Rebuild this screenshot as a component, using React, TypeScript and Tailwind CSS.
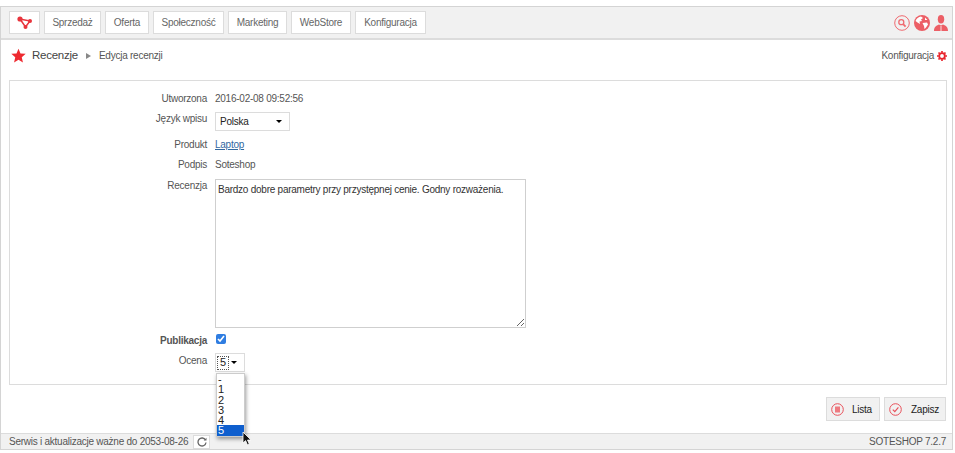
const menu = [
  { label: 'Sprzedaż', w: 'w-[57px]' },
  { label: 'Oferta', w: 'w-[44px]' },
  { label: 'Społeczność', w: 'w-[71px]' },
  { label: 'Marketing', w: 'w-[59px]' },
  { label: 'WebStore', w: 'w-[60px]' },
  { label: 'Konfiguracja', w: 'w-[71px]' },
];

function Logo() {
  return (
    <svg width="16" height="14" viewBox="0 0 16 14">
      <path d="M3 3 L8.5 11 L13 5 Z" fill="none" stroke="#e8343c" strokeWidth="1.5" />
      <circle cx="3" cy="3" r="2.6" fill="#e8343c" />
      <circle cx="13" cy="5" r="2" fill="#e8343c" />
      <circle cx="8.5" cy="11" r="2" fill="#e8343c" />
    </svg>
  );
}

function Star({ size }: { size: number }) {
  return (
    <svg width={size} height={size} viewBox="0 0 24 24">
      <path d="M12 1 L15.2 8.6 L23.5 9.3 L17.2 14.8 L19.1 23 L12 18.7 L4.9 23 L6.8 14.8 L.5 9.3 L8.8 8.6 Z" fill="#ee2a30" />
    </svg>
  );
}

function Gear() {
  return (
    <svg width="10" height="10" viewBox="0 0 12 12">
      <circle cx="6" cy="6" r="3.4" fill="none" stroke="#e8252d" strokeWidth="2.2" />
      <path d="M6 0v12M0 6h12M1.8 1.8l8.4 8.4M10.2 1.8l-8.4 8.4" stroke="#e8252d" strokeWidth="2" strokeDasharray="2 8 2 0" />
    </svg>
  );
}

function SearchIcon() {
  return (
    <svg width="16" height="16" viewBox="0 0 16 16" fill="none" stroke="#ef6a70">
      <circle cx="8" cy="8" r="7.3" strokeWidth="1" />
      <circle cx="7.3" cy="7.2" r="2.5" strokeWidth="1.3" />
      <path d="M9.2 9.2 L11.6 11.6" strokeWidth="1.8" />
    </svg>
  );
}

function GlobeIcon() {
  return (
    <svg width="16" height="16" viewBox="0 0 16 16">
      <circle cx="8" cy="8" r="8" fill="#ec5f66" />
      <path d="M1.5 6 C2.5 3.5 4.5 2 7 1.6 L9 3 L7 4.5 L8 6 L5.5 6.5 L6 9 L3.5 7.5 Z M8.5 8 L13 7.5 L14 9.5 L12 12.5 L10.5 14 L10 11 Z M11 2.5 L13.5 5 L11 5 Z" fill="#fff" />
    </svg>
  );
}

function UserIcon() {
  return (
    <svg width="14" height="16" viewBox="0 0 14 16">
      <ellipse cx="7" cy="4.2" rx="3.2" ry="4.2" fill="#ec5f66" />
      <path d="M0 16 C0 12 2 10.5 5 9.5 L7 10.5 L9 9.5 C12 10.5 14 12 14 16 Z" fill="#ec5f66" />
      <path d="M7 11 V16" stroke="#fff" strokeWidth="0.8" />
    </svg>
  );
}

export default function App() {
  return (
    <div className="h-[453px] w-[955px] overflow-hidden bg-white pt-[6px] font-['Liberation_Sans',Arial,sans-serif] text-[10px] tracking-[-0.25px] text-[#555]">
      <div className="relative flex h-[444px] w-[953px] flex-col border border-[#d4d4d4] bg-white">
        {/* Top nav */}
        <nav className="flex h-[33px] items-center gap-[4px] border-b-2 border-[#dcdcdc] bg-[#f1f1f1] pl-[8px] pr-[4px]">
          <a className="flex h-[23px] w-[31px] items-center justify-center border border-[#dcdcdc] bg-white">
            <Logo />
          </a>
          {menu.map((m) => (
            <a key={m.label} className={`flex h-[23px] ${m.w} items-center justify-center border border-[#dcdcdc] bg-white text-[#666]`}>
              {m.label}
            </a>
          ))}
          <div className="ml-auto flex items-center gap-[4px]">
            <SearchIcon />
            <GlobeIcon />
            <UserIcon />
          </div>
        </nav>

        {/* Breadcrumb */}
        <div className="flex h-[31px] items-center pl-[10px] pr-[5px]">
          <Star size={15} />
          <span className="ml-[6px] text-[11.5px] text-[#444]">Recenzje</span>
          <span className="ml-[8px] h-0 w-0 border-y-[3px] border-l-[5px] border-y-transparent border-l-[#888]" />
          <span className="ml-[8px]">Edycja recenzji</span>
          <span className="ml-auto mr-[3px]">Konfiguracja</span>
          <Gear />
        </div>

        {/* Form panel */}
        <div className="ml-[8px] mr-[5px] mt-[9px] h-[305px] border border-[#dcdcdc] pt-[10px]">
          <div className="grid grid-cols-[197px_1fr] items-start gap-x-[8px]">
            <label className="h-[21px] text-right">Utworzona</label>
            <div className="h-[21px]">2016-02-08 09:52:56</div>

            <label className="h-[25px] text-right leading-[13px]">Język wpisu</label>
            <div className="h-[25px]">
              <div className="flex h-[19px] w-[75px] items-center justify-between border border-[#dcdcdc] pl-[4px] pr-[7px] text-[#222]">
                Polska
                <span className="h-0 w-0 border-x-[3.5px] border-t-[3.5px] border-x-transparent border-t-black" />
              </div>
            </div>

            <label className="h-[20px] text-right">Produkt</label>
            <a className="h-[20px] text-[#33689f] underline">Laptop</a>

            <label className="h-[22px] text-right">Podpis</label>
            <div className="h-[22px]">Soteshop</div>

            <label className="text-right leading-[13px]">Recenzja</label>
            <textarea
              readOnly
              className="h-[149px] w-[311px] resize border border-[#cfcfcf] bg-white p-[2px] text-[#333] outline-none"
              defaultValue="Bardzo dobre parametry przy przystępnej cenie. Godny rozważenia."
            />

            <label className="mt-[5px] h-[20px] text-right font-bold">Publikacja</label>
            <div className="mt-[6px] h-[19px]">
              <input type="checkbox" defaultChecked className="ml-px block h-[10px] w-[10px] accent-[#2f7de1]" />
            </div>

            <label className="text-right">Ocena</label>
            <div className="relative h-[19px] w-[30px]">
              <div className="flex h-[19px] w-[30px] items-center gap-[2px] border border-[#dcdcdc] pl-px text-[11px] text-[#222]">
                <span className="flex h-[14px] w-[12px] items-center justify-center border border-dotted border-[#555] leading-none">5</span>
                <span className="h-0 w-0 border-x-[3.5px] border-t-[3.5px] border-x-transparent border-t-black" />
              </div>
              <ul className="absolute left-px top-[20px] z-10 h-[64px] w-[29px] border border-[#ccc] bg-white text-[11px] leading-[10.3px] text-[#222] shadow-[1px_2px_4px_rgba(0,0,0,0.4)]">
                <li className="pl-[1px]">-</li>
                <li className="pl-[1px]">1</li>
                <li className="pl-[1px]">2</li>
                <li className="pl-[1px]">3</li>
                <li className="pl-[1px]">4</li>
                <li className="bg-[#0f5fce] pl-[1px] text-white">5</li>
              </ul>
            </div>
          </div>
        </div>

        {/* Action buttons */}
        <div className="flex h-[48px] items-center justify-end gap-[4px] pr-[6px]">
          <button className="flex h-[24px] w-[54px] items-center gap-[8px] border border-[#dcdcdc] bg-[#f1f1f1] pl-[4px] text-[#222]">
            <svg width="13" height="13" viewBox="0 0 13 13" fill="none">
              <circle cx="6.5" cy="6.5" r="5.8" stroke="#e8505a" />
              <rect x="4" y="3.5" width="5" height="6" fill="#ee7a80" />
            </svg>
            Lista
          </button>
          <button className="flex h-[24px] w-[62px] items-center gap-[9px] border border-[#dcdcdc] bg-[#f1f1f1] pl-[4px] text-[#222]">
            <svg width="13" height="13" viewBox="0 0 13 13" fill="none">
              <circle cx="6.5" cy="6.5" r="5.8" stroke="#e8505a" />
              <path d="M3.8 6.6 L5.8 8.6 L9.4 4.4" stroke="#e8505a" strokeWidth="1.2" />
            </svg>
            Zapisz
          </button>
        </div>

        {/* Footer */}
        <footer className="flex h-[16px] flex-1 items-center border-t border-[#dcdcdc] bg-[#f1f1f1] pl-[8px] pr-[6px]">
          <span>Serwis i aktualizacje ważne do 2053-08-26</span>
          <span className="ml-[5px] flex h-[14px] w-[17px] items-center justify-center border border-[#dcdcdc] bg-white">
            <svg width="10" height="10" viewBox="0 0 10 10" fill="none">
              <path d="M8.5 3 A4 4 0 1 0 9 5.5" stroke="#666" strokeWidth="1.3" />
              <path d="M9.5 0.8 V3.6 H6.7 Z" fill="#666" />
            </svg>
          </span>
          <span className="ml-auto">SOTESHOP 7.2.7</span>
        </footer>

        {/* Mouse pointer over the open list */}
        <svg width="11" height="15" viewBox="0 0 11 15" className="absolute left-[241px] top-[424px] z-20">
          <path d="M1 1 V12 L3.6 9.6 L5.4 13.8 L7.3 13 L5.5 9 H9 Z" fill="#111" stroke="#fff" strokeWidth="0.8" />
        </svg>
      </div>
    </div>
  );
}
